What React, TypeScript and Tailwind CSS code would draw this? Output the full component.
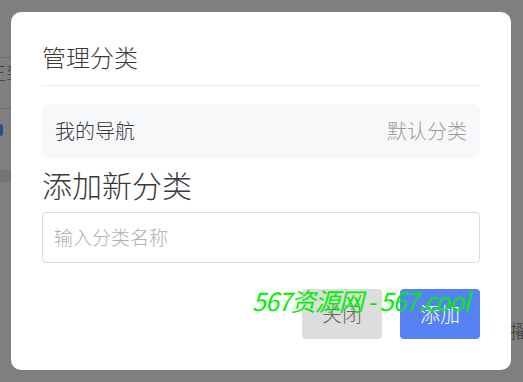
import React from "react";

const font = { fontFamily: '"Noto Sans CJK SC", "Noto Sans", sans-serif' };

function Backdrop() {
  // bits of the dimmed page that show around the modal
  return (
    <>
      <div className="absolute left-0 top-[57px] h-px w-[11px] bg-[#6e6e6e]" />
      <div className="absolute left-0 top-[108px] h-px w-[11px] bg-[#6e6e6e]" />
      <div className="absolute left-[-12px] top-[62px] text-[18px] leading-[20px] text-[#3c3c3c]">王到</div>
      <div className="absolute left-0 top-[124px] h-[12px] w-[3px] rounded-r bg-[#2a4f86]" />
      <div className="absolute left-0 top-[170px] h-[12px] w-[11px] bg-[#747474]" />
      <div className="absolute left-[510px] top-[320px] text-[18px] leading-[20px] text-[#3c3c3c]">擢</div>
    </>
  );
}

export default function App() {
  return (
    <div className="relative h-[382px] w-full overflow-hidden bg-[#7f7f7f] font-light" style={font}>
      <Backdrop />
      <div className="relative ml-[11px] pt-[12px]">
        <div className="flex w-[500px] flex-col rounded-[10px] bg-white px-[31px] pt-[29px] pb-[31px]">
          <div className="border-b border-[#ececec] pb-[12px] text-[24px] leading-[32px] text-[#3a3a3a]">
            管理分类
          </div>

          <div className="mt-[18px] flex h-[54px] items-center justify-between rounded-[6px] bg-[#f7f8fa] px-[13px] text-[20px] leading-[24px]">
            <span className="text-[#3a3a3a]">我的导航</span>
            <span className="text-[#9a9a9a]">默认分类</span>
          </div>

          <h3 className="mt-[6px] text-[30px] leading-[40px] text-[#3a3a3a]">添加新分类</h3>

          <div className="mt-[8px] flex h-[51px] items-center rounded-[4px] border border-[#dcdcdc] px-[11px] text-[19px] text-[#b0b0b0]">
            输入分类名称
          </div>

          <div className="mt-[26px] flex justify-end gap-[18px]">
            <button className="h-[50px] w-[80px] rounded-[4px] bg-[#dddddd] text-[20px] text-[#666]">关闭</button>
            <button className="h-[50px] w-[80px] rounded-[4px] bg-[#5682f6] text-[20px] text-white">添加</button>
          </div>
        </div>
      </div>

      <div className="absolute left-[252px] top-[283px] text-[25px] font-normal italic leading-[34px] tracking-[-1px] text-[#00f000]">
        567资源网 - 567.cool
      </div>
    </div>
  );
}
